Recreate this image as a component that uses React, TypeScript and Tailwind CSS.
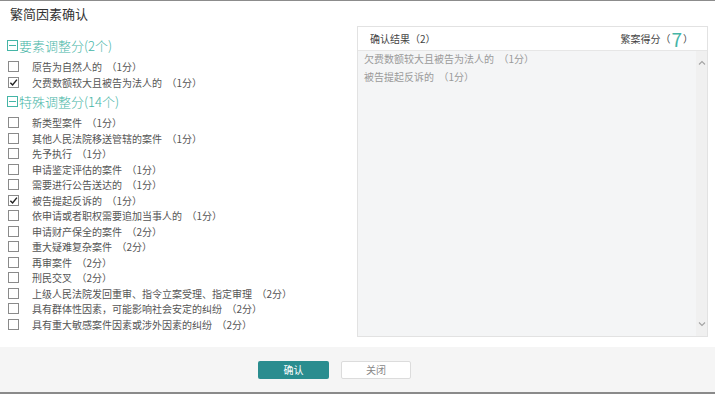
import React from 'react';

interface Item {
  label: string;
  score: number;
  checked?: boolean;
}

const basic: Item[] = [
  { label: '原告为自然人的', score: 1 },
  { label: '欠费数额较大且被告为法人的', score: 1, checked: true },
];

const special: Item[] = [
  { label: '新类型案件', score: 1 },
  { label: '其他人民法院移送管辖的案件', score: 1 },
  { label: '先予执行', score: 1 },
  { label: '申请鉴定评估的案件', score: 1 },
  { label: '需要进行公告送达的', score: 1 },
  { label: '被告提起反诉的', score: 1, checked: true },
  { label: '依申请或者职权需要追加当事人的', score: 1 },
  { label: '申请财产保全的案件', score: 2 },
  { label: '重大疑难复杂案件', score: 2 },
  { label: '再审案件', score: 2 },
  { label: '刑民交叉', score: 2 },
  { label: '上级人民法院发回重审、指令立案受理、指定审理', score: 2 },
  { label: '具有群体性因素，可能影响社会安定的纠纷', score: 2 },
  { label: '具有重大敏感案件因素或涉外因素的纠纷', score: 2 },
];

function Check({ checked }: { checked?: boolean }) {
  return (
    <span className="w-[11px] h-[11px] border border-[#8a8a8a] bg-white flex items-center justify-center shrink-0">
      {checked && (
        <svg width="9" height="9" viewBox="0 0 10 10">
          <path d="M1.5 5.2 L4 7.8 L8.8 1.8" stroke="#222" strokeWidth="1.6" fill="none" />
        </svg>
      )}
    </span>
  );
}

function Group({ title, items }: { title: string; items: Item[] }) {
  return (
    <div>
      <div className="flex items-center h-[21px] text-[13px] text-[#45b5a6] font-light">
        <span className="w-[11px] h-[11px] border border-[#45b5a6] flex items-center justify-center mr-[1px]">
          <span className="w-[7px] h-[1px] bg-[#45b5a6]" />
        </span>
        {title}
      </div>
      <div className="mt-[3px]">
        {items.map((it, i) => (
          <div key={i} className="flex items-center h-[15.5px] pl-[1px] text-[10px] text-[#555]">
            <Check checked={it.checked} />
            <span className="ml-[13px]">{it.label}&nbsp;&nbsp;（{it.score}分）</span>
          </div>
        ))}
      </div>
    </div>
  );
}

export default function App() {
  return (
    <div
      className="w-[715px] h-[394px] bg-white flex flex-col border-t border-[#8c8c8c] overflow-hidden"
      style={{ fontFamily: '"Noto Sans CJK SC", "Noto Sans", sans-serif' }}
    >
      <div className="h-[27px] flex items-start pt-[3px] pl-[10px] text-[13px] text-[#333] shrink-0">繁简因素确认</div>
      <div className="flex flex-1 min-h-0 pl-[7px] pr-[7px]">
        <div className="flex-1 pt-[7px] flex flex-col gap-[1px]">
          <Group title="要素调整分(2个)" items={basic} />
          <Group title="特殊调整分(14个)" items={special} />
        </div>
        <div className="w-[351px] h-[311px] border border-[#e2e2e2] bg-[#f4f5f6] flex flex-col mt-[-2px]">
          <div className="h-[24px] bg-white border-b border-[#e6e6e6] flex items-center justify-between pl-[12px] pr-[14px] text-[10px] text-[#444]">
            <span>确认结果（2）</span>
            <span className="flex items-center">
              繁案得分（<span className="text-[19px] text-[#45b5a6] leading-none mx-[1px]">7</span>）
            </span>
          </div>
          <div className="flex flex-1 min-h-0">
            <div className="flex-1 pl-[6px] mt-[-2px] text-[10px] text-[#9a9a9a]">
              <div className="h-[18px] flex items-center">欠费数额较大且被告为法人的&nbsp;&nbsp;（1分）</div>
              <div className="h-[18px] flex items-center">被告提起反诉的&nbsp;&nbsp;（1分）</div>
            </div>
            <div className="w-[11px] bg-[#f0f0f0] flex flex-col items-center justify-between py-[9px]">
              <svg width="8" height="6" viewBox="0 0 8 6">
                <path d="M1 4.5 L4 1.5 L7 4.5" stroke="#a3a3a3" strokeWidth="1.1" fill="none" />
              </svg>
              <svg width="8" height="6" viewBox="0 0 8 6">
                <path d="M1 1.5 L4 4.5 L7 1.5" stroke="#a3a3a3" strokeWidth="1.1" fill="none" />
              </svg>
            </div>
          </div>
        </div>
      </div>
      <div className="h-[45px] bg-[#f5f5f5] flex items-center pl-[258px] gap-[12px] shrink-0">
        <button className="w-[71px] h-[18px] bg-[#2a8d8f] rounded-[2px] text-white text-[10px]">确认</button>
        <button className="w-[70px] h-[18px] bg-white border border-[#dcdcdc] rounded-[2px] text-[#888] text-[10px]">关闭</button>
      </div>
      <div className="h-[2px] bg-[#8a8a8a] shrink-0" />
    </div>
  );
}
